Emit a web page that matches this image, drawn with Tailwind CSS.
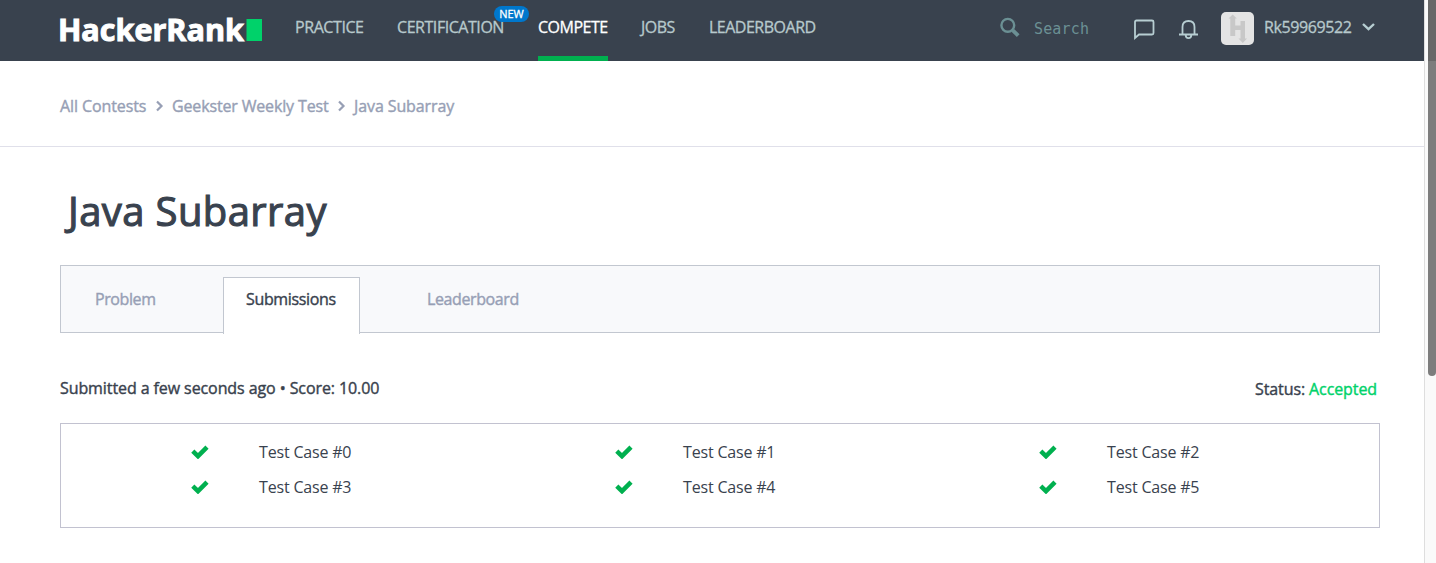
<!DOCTYPE html>
<html lang="en">
<head>
<meta charset="utf-8">
<title>Java Subarray | HackerRank</title>
<script src="https://cdn.jsdelivr.net/npm/@tailwindcss/browser@4"></script>
</head>
<body class="flex h-[563px] overflow-hidden bg-white font-['Open_Sans','Noto_Sans',sans-serif] text-base text-[#39424e]">
<svg class="hidden">
  <symbol id="check" viewBox="0 0 18 14"><path d="M1.800 6.100L7 11.200L16 2.200" fill="none" stroke="#00b04f" stroke-width="4.500"/></symbol>
  <symbol id="chev" viewBox="0 0 8 12"><path d="M1 1.500L5.500 6L1 10.500" fill="none" stroke="#979fb5" stroke-width="2.200"/></symbol>
</svg>
<div class="flex w-[1424px] shrink-0 flex-col">
  <header class="flex h-[61px] shrink-0 items-start bg-[#39424e] pl-[60px] text-[#b7c9cc]">
    <svg class="h-[61px] w-[235px] shrink-0 overflow-visible" viewBox="0 0 235 61">
      <text x="-2" y="40.700" textLength="186" lengthAdjust="spacingAndGlyphs" stroke="#fff" stroke-width="1" class="fill-white font-['Open_Sans'] text-[29.5px] font-bold">HackerRank</text>
      <rect x="186.500" y="19" width="15.500" height="22" fill="#00d26a"/>
    </svg>
    <nav class="flex h-[61px] shrink-0 whitespace-nowrap text-[16px] leading-[55px] [-webkit-text-stroke:0.3px]">
      <a class="w-[102px] tracking-[-0.42px]">PRACTICE</a>
      <a class="relative w-[141px] tracking-[-0.45px]">CERTIFICATION<span class="absolute left-[97px] top-[6px] h-4 w-[35px] rounded-full bg-[#0077cc] text-center text-[11px] leading-4 tracking-normal text-white">NEW</span></a>
      <a class="mr-8 w-[70px] border-b-[5px] border-[#00b04f] tracking-[-0.5px] text-white">COMPETE</a>
      <a class="w-[69px] pl-px tracking-[-0.5px]">JOBS</a>
      <a class="w-[291px] tracking-[-0.5px]">LEADERBOARD</a>
    </nav>
    <svg class="mt-[17px] h-6 w-[34px] shrink-0" viewBox="0 0 34 24"><circle cx="7.800" cy="8.300" r="6.400" fill="none" stroke="#6b9094" stroke-width="2.400"/><path d="M12.800 13.300L18.200 18.700" stroke="#6b9094" stroke-width="3.800"/></svg>
    <span class="w-[100px] font-['DejaVu_Sans_Mono',monospace] text-[15px] leading-[59px] tracking-[0.15px] text-[#6b9094]">Search</span>
    <svg class="mt-[19px] h-6 w-[45px] shrink-0" viewBox="0 0 45 24" fill="none" stroke="#b7ced2" stroke-width="1.800"><path d="M1 19V3Q1 1.500 2.500 1.500H18Q19.500 1.500 19.500 3V14Q19.500 15.500 18 15.500H5Z"/></svg>
    <svg class="mt-[19px] h-6 w-[42px] shrink-0" viewBox="0 0 42 24" fill="none" stroke="#b7ced2" stroke-width="1.800"><path d="M0 15.500H19M3.500 15V8Q3.500 2 9.500 2Q15.500 2 15.500 8V15M6.700 16A2.800 3.200 0 0 0 12.300 16"/></svg>
    <svg class="mt-3 h-[33px] w-[43px] shrink-0" viewBox="0 0 43 33"><rect width="33" height="33" rx="5" fill="#e4e4e4"/><path d="M9.300 24V6.500H7.500L11.700 2.500L15.800 6.500H14.200V13.500H19.500V9H24V26.500H26L21.800 31L17.500 26.500H19.500V18H14.200V24Z" fill="#c8c8c8"/></svg>
    <span class="w-[98px] whitespace-nowrap text-[16px] leading-[55px] tracking-[-0.4px] [-webkit-text-stroke:0.3px]">Rk59969522</span>
    <svg class="mt-[22px] h-3 w-[14px] shrink-0" viewBox="0 0 14 12"><path d="M1 2L6.500 7.200L12 2" fill="none" stroke="#b7ced2" stroke-width="2.400"/></svg>
  </header>
  <div class="flex h-[86px] shrink-0 items-center whitespace-nowrap border-b border-[#e0e0ea] pl-[60px] pt-[5px] text-[#979fb5] [-webkit-text-stroke:0.4px]">
    <a class="w-24 tracking-[-0.1px]">All Contests</a><svg class="mr-2 h-3 w-2"><use href="#chev"/></svg>
    <a class="w-[166px] tracking-[-0.15px]">Geekster Weekly Test</a><svg class="mr-2 h-3 w-2"><use href="#chev"/></svg>
    <a class="tracking-[-0.1px]">Java Subarray</a>
  </div>
  <main class="flex w-[1380px] flex-col pl-[60px]">
    <h1 class="mt-[32px] h-[86px] pl-[8px] text-[40px] leading-[64px] tracking-[0.4px] [-webkit-text-stroke:1.1px]">Java Subarray</h1>
    <div class="flex h-[68px] shrink-0 items-start border border-[#c2c7d0] bg-[#f8f9fb] pt-[11px] text-[16px] leading-[44px] tracking-[-0.4px] text-[#979fb5] [-webkit-text-stroke:0.4px]">
      <a class="w-[162px] pl-[34px]">Problem</a>
      <a class="h-[57px] w-[137px] border border-b-0 border-[#c2c7d0] bg-white pl-[22px] leading-[42px] tracking-[-0.35px] text-[#39424e]">Submissions</a>
      <a class="pl-[67px]">Leaderboard</a>
    </div>
    <div class="flex h-[90px] items-start justify-between pr-[3px] pt-[43px] [-webkit-text-stroke:0.4px]">
      <p class="tracking-[-0.09px]">Submitted a few seconds ago • Score: 10.00</p>
      <p class="pt-px tracking-[-0.1px]">Status: <span class="text-[#00d26a]">Accepted</span></p>
    </div>
    <div class="grid h-[105px] shrink-0 grid-cols-[424px_424px_424px] content-start border border-[#c2c2d0] pl-[130px] pt-[11px] text-[16px] leading-[35px] tracking-[-0.18px]">
      <div class="flex items-center"><svg class="mr-[50px] mb-[1.5px] h-[14px] w-[18px]"><use href="#check"/></svg>Test Case #0</div>
      <div class="flex items-center"><svg class="mr-[50px] mb-[1.5px] h-[14px] w-[18px]"><use href="#check"/></svg>Test Case #1</div>
      <div class="flex items-center"><svg class="mr-[50px] mb-[1.5px] h-[14px] w-[18px]"><use href="#check"/></svg>Test Case #2</div>
      <div class="flex items-center"><svg class="mr-[50px] mb-[1.5px] h-[14px] w-[18px]"><use href="#check"/></svg>Test Case #3</div>
      <div class="flex items-center"><svg class="mr-[50px] mb-[1.5px] h-[14px] w-[18px]"><use href="#check"/></svg>Test Case #4</div>
      <div class="flex items-center"><svg class="mr-[50px] mb-[1.5px] h-[14px] w-[18px]"><use href="#check"/></svg>Test Case #5</div>
    </div>
  </main>
</div>
<aside class="h-[563px] w-3 shrink-0 border-l border-[#dedede] bg-[#fafafa] pl-[3px]"><div class="h-[61px] w-2 bg-[#686868]"></div><div class="h-[315px] w-2 rounded-b bg-[#7d7d7d]"></div></aside>
</body>
</html>
